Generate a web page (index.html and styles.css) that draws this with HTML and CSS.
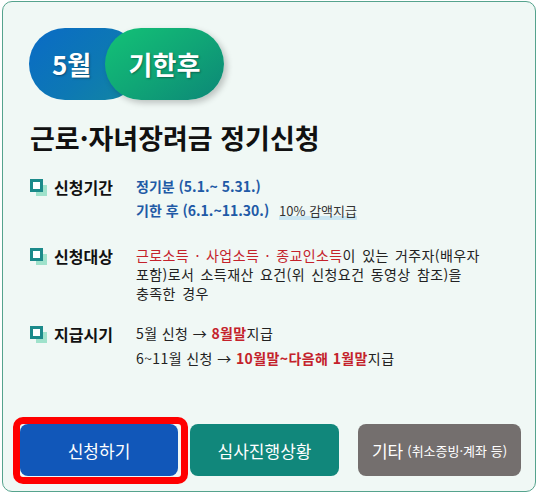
FILE: index.html
```html
<!DOCTYPE html>
<html lang="ko">
<head>
<meta charset="utf-8">
<link rel="stylesheet" href="styles.css">
</head>
<body>
<div class="card">
  <div class="badge">
    <span class="month">5월</span>
    <span class="after">기한후</span>
  </div>
  <h1 class="title">근로·자녀장려금 정기신청</h1>

  <div class="row row-period">
    <div class="label">
      <svg class="chk" width="18" height="18" viewBox="0 0 18 18"><rect x="6" y="6" width="11" height="11" fill="#9fe2cb"/><rect x="1.5" y="1.5" width="10" height="10" fill="#fff" stroke="#1b8a8a" stroke-width="3"/></svg>
      <span>신청기간</span>
    </div>
    <div class="content">
      <div class="line blue">정기분 (5.1.~ 5.31.)</div>
      <div class="line"><span class="blue">기한 후 (6.1.~11.30.)</span> <span class="note">10% 감액지급</span></div>
    </div>
  </div>

  <div class="row row-target">
    <div class="label">
      <svg class="chk" width="18" height="18" viewBox="0 0 18 18"><rect x="6" y="6" width="11" height="11" fill="#9fe2cb"/><rect x="1.5" y="1.5" width="10" height="10" fill="#fff" stroke="#1b8a8a" stroke-width="3"/></svg>
      <span>신청대상</span>
    </div>
    <div class="content para">
      <span class="red">근로소득 · 사업소득 · 종교인소득</span>이 있는 거주자(배우자 포함)로서 소득재산 요건(위 신청요건 동영상 참조)을 충족한 경우
    </div>
  </div>

  <div class="row row-pay">
    <div class="label">
      <svg class="chk" width="18" height="18" viewBox="0 0 18 18"><rect x="6" y="6" width="11" height="11" fill="#9fe2cb"/><rect x="1.5" y="1.5" width="10" height="10" fill="#fff" stroke="#1b8a8a" stroke-width="3"/></svg>
      <span>지급시기</span>
    </div>
    <div class="content spaced">
      <div class="line">5월 신청 → <b class="red">8월말</b>지급</div>
      <div class="line line2">6~11월 신청 → <b class="red">10월말~다음해 1월말</b>지급</div>
    </div>
  </div>

  <div class="buttons">
    <div class="btn-wrap">
      <a class="btn btn-apply">신청하기</a>
      <span class="mark"></span>
    </div>
    <a class="btn btn-status">심사진행상황</a>
    <a class="btn btn-etc">기타 <small>(취소증빙·계좌 등)</small></a>
  </div>
</div>
</body>
</html>
```

FILE: styles.css
```css
* { box-sizing: border-box; }
html, body { margin: 0; padding: 0; background: #ffffff; }
body {
  font-family: "Noto Sans CJK KR", "Noto Sans", sans-serif;
  color: #222;
}
.card {
  margin: 1px 0 0 2px;
  width: 534px;
  height: 491px;
  border: 1.5px solid #55a38d;
  border-radius: 10px;
  background: #f0f8f5;
  padding: 26px 14px 15px 26px;
  display: flex;
  flex-direction: column;
}
.badge {
  display: flex;
  height: 72px;
}
.month {
  position: relative;
  width: 112px;
  height: 72px;
  border-radius: 36px;
  margin-right: -36px;
  padding-left: 23px;
  background: linear-gradient(135deg, #0a6bc6 0%, #0d78b4 55%, #1387a0 100%);
  color: #fff;
  font-weight: 700;
  font-size: 26px;
  line-height: 72px;
  text-shadow: 1px 1px 2px rgba(0,0,0,.35);
}
.after {
  position: relative;
  width: 119px;
  height: 72px;
  border-radius: 36px;
  background: linear-gradient(145deg, #13c276 0%, #10a676 50%, #0c8777 100%);
  color: #fff;
  font-weight: 700;
  font-size: 26px;
  line-height: 72px;
  text-align: center;
  text-shadow: 1px 1px 2px rgba(0,0,0,.35);
  box-shadow: 3px 3px 6px rgba(0,0,0,.22);
}
.title {
  margin: 20px 0 0 1px;
  font-size: 27px;
  line-height: 36px;
  font-weight: 700;
  color: #111;
}
.row {
  display: flex;
  margin-left: 1px;
}
.row-period { margin-top: 21px; }
.row-target { margin-top: 26px; }
.row-pay { margin-top: 21px; }
.label {
  width: 106px;
  flex: none;
  display: flex;
  align-items: center;
  gap: 6px;
  height: 19px;
  font-size: 16px;
  font-weight: 700;
  color: #111;
}
.chk { flex: none; margin-top: 2px; }
.content {
  font-size: 14px;
  line-height: 19px;
  max-width: 362px;
}
.line + .line { margin-top: 5px; }
.line2 { margin-top: 6px !important; }
.para { word-break: keep-all; color: #222; letter-spacing: 0.4px; word-spacing: 2px; max-width: 352px; }
.spaced { letter-spacing: 0.4px; }
.blue { color: #1f5aa6; font-weight: 700; }
.red { color: #c4222b; }
b.red { font-weight: 700; }
.note {
  font-size: 13px;
  color: #333;
  margin-left: 6px;
  background: linear-gradient(to bottom, transparent 80%, #cbe6f1 80%);
}
.buttons {
  margin-top: auto;
  margin-left: -9px;
  display: flex;
  height: 52px;
}
.btn-wrap { position: relative; }
.btn {
  display: flex;
  align-items: center;
  justify-content: center;
  height: 52px;
  border-radius: 8px;
  color: #fff;
  font-size: 17px;
  text-decoration: none;
}
.btn-apply { width: 158px; background: #1157b9; }
.btn-status { width: 149px; margin-left: 12px; background: #11877b; }
.btn-etc { width: 163px; margin-left: 19px; background: #746f6e; }
.btn-etc small { font-size: 13px; margin-left: 4px; }
.mark {
  position: absolute;
  left: -7px;
  top: -7px;
  right: -10px;
  bottom: -8px;
  border: 7px solid #ff0000;
  border-radius: 10px;
}
```
